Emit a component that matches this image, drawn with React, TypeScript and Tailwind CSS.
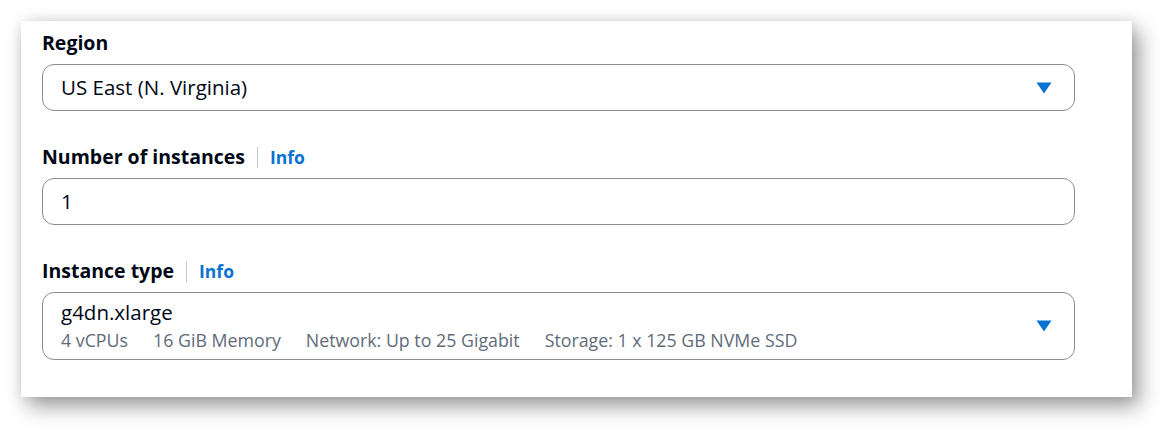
const font = { fontFamily: '"Open Sans", "Noto Sans", Arial, sans-serif' };

function Caret() {
  return (
    <svg width="16" height="12" viewBox="0 0 16 12" className="shrink-0">
      <path d="M0.5 0.5 H15.5 L8 11.5 Z" fill="#0972d3" />
    </svg>
  );
}

function Label({ text, info }: { text: string; info?: boolean }) {
  return (
    <div className="flex items-center h-[26px] mb-[8px]">
      <span className="text-[19.5px] font-bold text-[#000716] leading-[26px]">{text}</span>
      {info && (
        <>
          <span className="ml-[12px] mr-[12px] w-px h-[21px] bg-[#c6c6cd]" />
          <span className="text-[17.5px] font-bold text-[#0972d3] leading-[26px]">Info</span>
        </>
      )}
    </div>
  );
}

const specs = ["4 vCPUs", "16 GiB Memory", "Network: Up to 25 Gigabit", "Storage: 1 x 125 GB NVMe SSD"];

export default function App() {
  return (
    <div className="w-[1174px] h-[439px] bg-white pt-[21px] pl-[21px]" style={font}>
      <div className="w-[1111px] h-[376px] bg-white pt-[9px] pl-[21px] pr-[57px] shadow-[7px_9px_20px_rgba(0,0,0,0.4),0_0_12px_rgba(0,0,0,0.08)]">
        <Label text="Region" />
        <div className="flex items-center justify-between h-[47px] border border-[#8c8c94] rounded-[12px] pl-[18px] pr-[22px]">
          <span className="text-[20.5px] text-[#000716]">US East (N. Virginia)</span>
          <Caret />
        </div>

        <div className="mt-[33px]">
          <Label text="Number of instances" info />
        </div>
        <div className="flex items-center h-[47px] border border-[#8c8c94] rounded-[12px] pl-[18px] pr-[22px]">
          <span className="text-[20.5px] text-[#000716]">1</span>
        </div>

        <div className="mt-[33px]">
          <Label text="Instance type" info />
        </div>
        <div className="flex items-center justify-between h-[68px] border border-[#8c8c94] rounded-[12px] pl-[18px] pr-[22px]">
          <div className="flex flex-col">
            <span className="text-[20.5px] text-[#000716] leading-[25px]">g4dn.xlarge</span>
            <div className="flex gap-[25px] mt-[3px]">
              {specs.map((s) => (
                <span key={s} className="text-[17.8px] text-[#5f6b7a] leading-[24px]">{s}</span>
              ))}
            </div>
          </div>
          <Caret />
        </div>
      </div>
    </div>
  );
}
